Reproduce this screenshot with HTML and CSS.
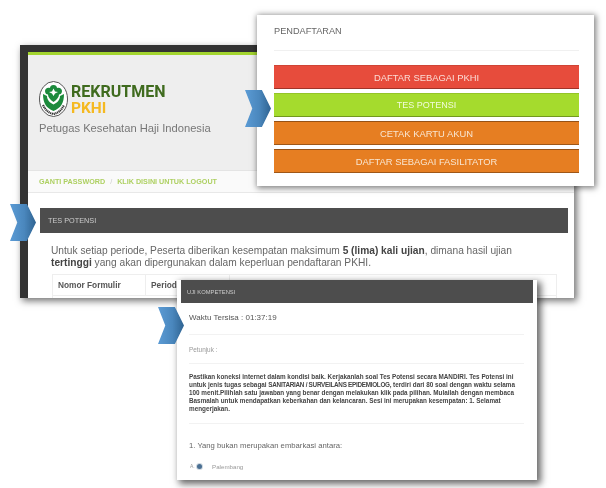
FILE: index.html
```html
<!DOCTYPE html>
<html lang="id">
<head>
<meta charset="utf-8">
<title>Rekrutmen PKHI</title>
<link rel="stylesheet" href="styles.css">
</head>
<body>
<main class="canvas">
  <section class="win win-back">
    <div class="accent"></div>
    <header class="hero">
      <div class="brand">
        <svg class="emblem" viewBox="0 0 29 36" aria-hidden="true">
          <ellipse cx="14.5" cy="18" rx="14" ry="17.5" fill="#fff" stroke="#555" stroke-width="1"/>
          <path d="M4 13C4 22 7 27 14.5 30C22 27 25 22 25 13L21 15C21 19 18 22 14.5 23.5C11 22 8 19 8 15Z" fill="#1c8a3c"/>
          <path d="M14.5 4C17 4 18 5.5 18 7C20.500 6 23 7.500 23 10C23 12.500 21.500 13.500 20 13.500C20 16 18 18.500 14.500 21C11 18.500 9 16 9 13.500C7.500 13.500 6 12.500 6 10C6 7.500 8.500 6 11 7C11 5.500 12 4 14.500 4Z" fill="#1c8a3c"/>
          <path d="M14.500 7.500L16 10.500L19 11L16 12.500L14.500 15L13 12.500L10 11L13 10.500Z" fill="#fff"/>
          <path d="M4 24C7 30 10 32 14.500 33C19 32 22 30 25 24" fill="none" stroke="#333" stroke-width="2.200" stroke-dasharray="1.200 .6"/>
        </svg>
        <div class="wordmark">
          <span class="word-main">REKRUTMEN</span>
          <span class="word-sub">PKHI</span>
        </div>
      </div>
      <p class="tagline">Petugas Kesehatan Haji Indonesia</p>
    </header>
    <nav class="crumbs">
      <a>GANTI PASSWORD</a><span class="sep">/</span><a>KLIK DISINI UNTUK LOGOUT</a>
    </nav>
    <section class="panel">
      <h2 class="bar bar-large">TES POTENSI</h2>
      <p class="intro">Untuk setiap periode, Peserta diberikan kesempatan maksimum <b>5 (lima) kali ujian</b>, dimana hasil ujian <b>tertinggi</b> yang akan dipergunakan dalam keperluan pendaftaran PKHI.</p>
      <div class="table">
        <div class="cell cell-form">Nomor Formulir</div>
        <div class="cell cell-period">Periode</div>
        <div class="cell cell-rest"></div>
      </div>
    </section>
  </section>

  <section class="win win-top">
    <h2 class="top-title">PENDAFTARAN</h2>
    <div class="btn-list">
      <a class="btn btn-red">DAFTAR SEBAGAI PKHI</a>
      <a class="btn btn-green">TES POTENSI</a>
      <a class="btn btn-orange">CETAK KARTU AKUN</a>
      <a class="btn btn-orange">DAFTAR SEBAGAI FASILITATOR</a>
    </div>
  </section>

  <section class="win win-bottom">
    <h2 class="bar bar-small">UJI KOMPETENSI</h2>
    <div class="exam">
      <p class="timer">Waktu Tersisa : 01:37:19</p>
      <p class="hint">Petunjuk :</p>
      <p class="rules">Pastikan koneksi internet dalam kondisi baik. Kerjakanlah soal Tes Potensi secara MANDIRI. Tes Potensi ini<br>untuk jenis tugas sebagai <span class="caps">SANITARIAN / SURVEILANS EPIDEMIOLOG,</span> terdiri dari 80 soal dengan waktu selama<br>100 menit.Pilihlah satu jawaban yang benar dengan melakukan klik pada pilihan. Mulailah dengan membaca<br>Basmalah untuk mendapatkan keberkahan dan kelancaran. Sesi ini merupakan kesempatan: 1. Selamat<br>mengerjakan.</p>
      <p class="question">1. Yang bukan merupakan embarkasi antara:</p>
      <div class="option">
        <span class="opt-letter">A.</span>
        <span class="radio"></span>
        <span class="opt-text">Palembang</span>
      </div>
    </div>
  </section>

  <div class="arrow arrow-1"></div>
  <div class="arrow arrow-2"></div>
  <div class="arrow arrow-3"></div>
</main>
</body>
</html>
```
FILE: styles.css
```css
* { box-sizing: border-box; }
html, body { margin: 0; padding: 0; background: #fff; }
body { font-family: "Liberation Sans", Arial, sans-serif; overflow: hidden; }
p, h2 { margin: 0; font-weight: normal; }

.canvas { position: relative; width: 606px; height: 488px; overflow: hidden; filter: blur(0.4px); }

.win { position: absolute; background: #fff; overflow: hidden; }

/* back window */
.win-back {
  left: 20px; top: 45px; width: 555px; height: 253px;
  border-top: 7px solid #333;
  border-left: 8px solid #333;
  border-right: 1px solid #999;
  box-shadow: 2px 3px 7px rgba(0,0,0,.55);
}
.accent { height: 3px; background: #a3d52f; }
.hero { height: 115px; background: #eee; padding: 26px 0 0 11px; }
.brand { display: flex; align-items: flex-start; height: 36px; }
.emblem { width: 29px; height: 36px; flex: none; }
.wordmark { display: flex; flex-direction: column; margin-left: 3px; padding-top: 2px; font-family: Roboto, "Liberation Sans", sans-serif; font-weight: 700; }
.word-main { font-size: 16px; line-height: 17px; color: #3f6b1e; }
.word-sub { font-size: 15.5px; line-height: 17px; color: #f5b921; }
.tagline { margin-top: 4px; font-size: 11.2px; line-height: 15px; color: #777; }
.crumbs {
  height: 23px; padding-left: 11px; display: flex; align-items: center;
  border-top: 1px solid #e4e4e4; border-bottom: 1px solid #e8e8e8;
  background: #fafafa; font-size: 7.2px; color: #aed062; font-weight: bold;
}
.sep { margin: 0 5px; color: #ccc; font-weight: normal; }
.panel { padding: 15px 6px 0 12px; }
.bar { background: #4d4d4d; color: #ccc; display: flex; align-items: center; }
.bar-large { height: 25px; padding-left: 8px; font-size: 7.3px; }
.intro { padding: 12px 0 0 11px; width: 475px; font-size: 10.2px; line-height: 12px; color: #666; }
.intro b { color: #444; }
.table { display: flex; margin: 5px 0 0 12px; height: 40px; border: 1px solid #eee; width: 505px; }
.cell { border-right: 1px solid #eee; border-bottom: 1px solid #eee; padding: 5px 0 0 5px; height: 21px; font-size: 8.3px; line-height: 10px; font-weight: bold; color: #555; }
.cell-form { width: 93px; }
.cell-period { width: 84px; }
.cell-rest { flex: 1; border-right: 0; }

/* registration window */
.win-top {
  left: 257px; top: 15px; width: 337px; height: 171px;
  padding: 0 15px 0 17px;
  box-shadow: 1px 1px 6px 1px rgba(0,0,0,.5);
}
.top-title {
  height: 36px; padding-top: 11px; border-bottom: 1px solid #f0f0f0;
  font-size: 9.2px; line-height: 11px; color: #666;
}
.btn-list { display: flex; flex-direction: column; gap: 4px; margin-top: 14px; }
.btn {
  height: 24px; display: flex; align-items: center; justify-content: center;
  font-size: 9.4px; color: #f8e6d2;
  border-bottom: 1px solid rgba(0,0,0,.3);
  border-top: 1px solid rgba(0,0,0,.1);
}
.btn-red { background: #e74c3c; color: #fbdcd6; }
.btn-green { background: #a5db2d; color: #f2fbdc; font-size: 9px; }
.btn-orange { background: #e67e22; border-top-color: rgba(0,0,0,.35); }

/* exam window */
.win-bottom {
  left: 177px; top: 280px; width: 360px; height: 200px;
  padding: 0 4px;
  box-shadow: 3px 3px 7px 1px rgba(0,0,0,.6);
}
.bar-small { height: 23px; padding-left: 6px; font-size: 5.8px; }
.exam { padding: 0 9px 0 8px; color: #555; }
.timer { height: 32px; padding-top: 9px; border-bottom: 1px solid #f2f2f2; font-size: 8px; line-height: 11px; color: #555; }
.hint { height: 29px; padding-top: 11px; border-bottom: 1px solid #f2f2f2; font-size: 6.4px; line-height: 8px; color: #999; }
.rules { padding-top: 9px; height: 60px; border-bottom: 1px solid #f2f2f2; font-size: 6.35px; line-height: 8px; font-weight: bold; color: #444; white-space: nowrap; }
.caps { letter-spacing: -.28px; }
.question { padding-top: 16px; font-size: 7.7px; line-height: 12px; color: #666; }
.option { display: flex; align-items: center; margin-top: 9px; height: 10px; padding-left: 1px; font-size: 6.2px; color: #999; }
.opt-letter { width: 7px; font-size: 5px; }
.radio { width: 5px; height: 5px; border-radius: 50%; background: #4a6f92; box-shadow: 0 0 0 1px #cfd8e0; }
.opt-text { margin-left: 10px; }

/* chevrons */
.arrow {
  position: absolute; width: 26px; height: 37px;
  background: linear-gradient(90deg, #5b9bd5 0%, #4a87bd 55%, #2f6391 100%);
  clip-path: polygon(0 0, 65% 0, 100% 50%, 65% 100%, 0 100%, 28% 50%);
}
.arrow-1 { left: 245px; top: 90px; }
.arrow-2 { left: 10px; top: 204px; }
.arrow-3 { left: 158px; top: 307px; }
```
